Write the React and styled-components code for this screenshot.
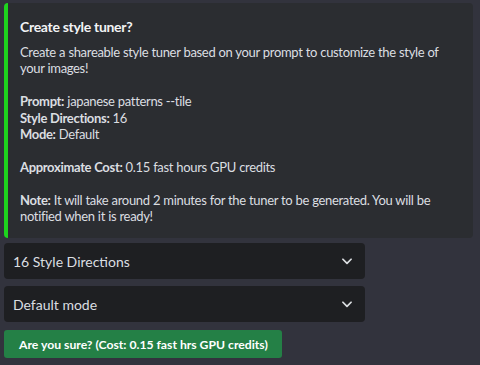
import React from "react";
import styled, { createGlobalStyle } from "styled-components";

const GlobalStyle = createGlobalStyle`
  html, body {
    margin: 0;
    padding: 0;
    background: #32333d;
  }
  body {
    font-family: Lato, "Noto Sans", sans-serif;
    -webkit-font-smoothing: antialiased;
  }
`;

const Page = styled.div`
  width: 480px;
  height: 365px;
  box-sizing: border-box;
  padding: 3px 7px 0 4px;
  display: flex;
  flex-direction: column;
  background: #32333d;
`;

const Embed = styled.div`
  background: #2b2d31;
  border-left: 4px solid #1ed41e;
  border-radius: 4px;
  padding: 15px 16px 14px 12px;
  color: #dbdee1;
`;

const Title = styled.div`
  font-weight: 700;
  font-size: 14px;
  letter-spacing: -0.3px;
  line-height: 18px;
  color: #f2f3f5;
  margin-bottom: 8px;
`;

const Description = styled.div`
  font-size: 13px;
  letter-spacing: -0.33px;
  word-spacing: 0.2px;
  line-height: 16.4px;
  color: #dbdee1;
`;

const Para = styled.p`
  margin: 0 0 16.4px;
  &:last-child {
    margin-bottom: 0;
  }
`;

const Label = styled.strong`
  font-weight: 700;
  color: #dbdee1;
`;

const Controls = styled.div`
  display: flex;
  flex-direction: column;
  gap: 7px;
  margin-top: 5px;
  width: 361px;
`;

const Select = styled.div`
  height: 36px;
  box-sizing: border-box;
  background: #1e1f22;
  border-radius: 4px;
  display: flex;
  align-items: center;
  justify-content: space-between;
  padding: 0 11px 0 9px;
  color: #dbdee1;
  font-size: 14px;
`;

const Chevron = () => (
  <svg width="14" height="14" viewBox="0 0 24 24" fill="none">
    <path
      d="M5 9l7 7 7-7"
      stroke="#dbdee1"
      strokeWidth="3"
      strokeLinecap="round"
      strokeLinejoin="round"
    />
  </svg>
);

const Button = styled.button`
  align-self: flex-start;
  margin-top: 1px;
  height: 28px;
  padding: 0 14px 0 15px;
  border: none;
  border-radius: 3px;
  background: #248046;
  color: #ffffff;
  font-family: Lato, "Noto Sans", sans-serif;
  font-weight: 700;
  font-size: 12.2px;
  cursor: pointer;
`;

export default function App() {
  return (
    <>
      <GlobalStyle />
      <Page>
        <Embed>
          <Title>Create style tuner?</Title>
          <Description>
            <Para>
              Create a shareable style tuner based on your prompt to customize the
              style of your images!
            </Para>
            <Para>
              <Label>Prompt:</Label> japanese patterns --tile
              <br />
              <Label>Style Directions:</Label> 16
              <br />
              <Label>Mode:</Label> Default
            </Para>
            <Para>
              <Label>Approximate Cost:</Label> 0.15 fast hours GPU credits
            </Para>
            <Para>
              <Label>Note:</Label> It will take around 2 minutes for the tuner to be
              generated. You will be notified when it is ready!
            </Para>
          </Description>
        </Embed>
        <Controls>
          <Select>
            <span>16 Style Directions</span>
            <Chevron />
          </Select>
          <Select>
            <span>Default mode</span>
            <Chevron />
          </Select>
          <Button>Are you sure? (Cost: 0.15 fast hrs GPU credits)</Button>
        </Controls>
      </Page>
    </>
  );
}
